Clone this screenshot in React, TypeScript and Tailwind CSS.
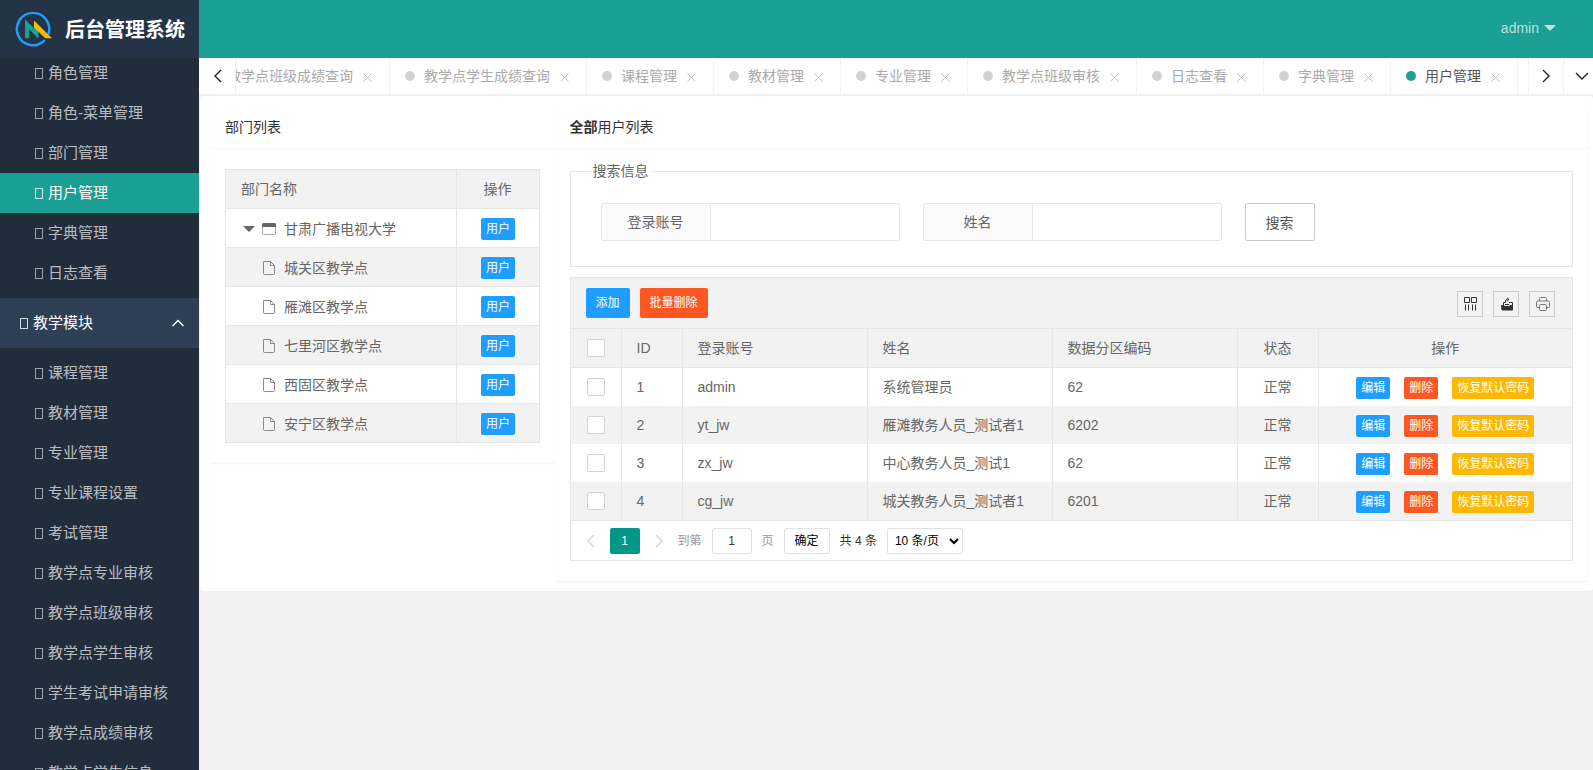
import { useState } from "react";
import clsx from "clsx";

interface UserRow {
    id: number,
    account: string,
    name: string,
    code: string,
}

const systemMenu = ["角色管理", "角色-菜单管理", "部门管理", "用户管理", "字典管理", "日志查看"];

const teachMenu = [
    "课程管理",
    "教材管理",
    "专业管理",
    "专业课程设置",
    "考试管理",
    "教学点专业审核",
    "教学点班级审核",
    "教学点学生审核",
    "学生考试申请审核",
    "教学点成绩审核",
    "教学点学生信息",
];

const tabs = [
    "教学点班级成绩查询",
    "教学点学生成绩查询",
    "课程管理",
    "教材管理",
    "专业管理",
    "教学点班级审核",
    "日志查看",
    "字典管理",
    "用户管理",
];

const departments = ["城关区教学点", "雁滩区教学点", "七里河区教学点", "西固区教学点", "安宁区教学点"];

const users: UserRow[] = [
    { id: 1, account: "admin", name: "系统管理员", code: "62" },
    { id: 2, account: "yt_jw", name: "雁滩教务人员_测试者1", code: "6202" },
    { id: 3, account: "zx_jw", name: "中心教务人员_测试1", code: "62" },
    { id: 4, account: "cg_jw", name: "城关教务人员_测试者1", code: "6201" },
];

const Chevron = ({ d, className }: { d: string, className?: string }) => (
    <svg width="14" height="14" viewBox="0 0 14 14" fill="none" stroke="currentColor" strokeWidth="1.4" className={className}>
        <path d={d} />
    </svg>
);

const LEFT = "M10 1 4 7l6 6";
const RIGHT = "M4 1l6 6-6 6";
const UP = "M1.500 10 7 4.500 12.500 10";
const DOWN = "M1 4l6 6 6-6";

const Logo = () => (
    <svg width="40" height="40" viewBox="0 0 40 40" fill="none">
        <path d="M33.300 25.500A16.200 16.200 0 1 0 29.800 31.200" stroke="#1e9fff" strokeWidth="2.400" />
        <path d="M10 10.300 23.300 23.500v5.800L14.300 20.500v8.800H10z" fill="#1aa094" />
        <path d="M19 16h4.300v13.300L19 25z" fill="#1aa094" />
        <path d="M19 11.500 37 29.300h-6.800L19 18.500z" fill="#ffb800" />
    </svg>
);

const FileIcon = () => (
    <svg width="14" height="14" viewBox="0 0 14 14" fill="none" stroke="#8a8a8a">
        <path d="M1.500.5h7l4 4v8q0 1-1 1h-9q-1 0-1-1v-11q0-1 1-1zM8.500.5v4h4" />
    </svg>
);

const CardIcon = () => (
    <svg width="14" height="12" viewBox="0 0 14 12" fill="none">
        <rect x=".5" y=".5" width="13" height="11" rx="1" stroke="#aaa" />
        <path d="M0 4V1.500Q0 0 1.500 0h11Q14 0 14 1.500V4z" fill="#666" />
    </svg>
);

// placeholder box shown when the menu icon font is missing a glyph
const MenuGlyph = () => <span className="h-[11px] w-2 shrink-0 border border-current opacity-80" />;

const MenuItem = (props: { title: string, active: boolean, onSelect: () => void }) => (
    <li>
        <a
            href="#"
            onClick={(e) => { e.preventDefault(); props.onSelect(); }}
            className={clsx(
                "flex h-10 items-center gap-[5px] pl-[35px] text-[15px] whitespace-nowrap",
                props.active ? "bg-[#1aa094] text-white" : "text-white/70 hover:text-white",
            )}
        >
            <MenuGlyph />
            {props.title}
        </a>
    </li>
);

const SmallButton = ({ color, children }: { color: string, children: string }) => (
    <button type="button" className={clsx("h-[22px] rounded-xs px-[5px] text-xs leading-[22px] text-white", color)}>
        {children}
    </button>
);

const CheckBox = ({ label }: { label: string }) => (
    <input
        type="checkbox"
        aria-label={label}
        className="block size-[18px] appearance-none rounded-xs border border-[#d2d2d2] bg-white checked:border-[#5fb878] checked:bg-[#5fb878]"
    />
);

const ToolButton = ({ label, children }: { label: string, children: React.ReactNode }) => (
    <button type="button" aria-label={label} className="flex size-[26px] items-center justify-center border border-[#ccc] pl-0.5">
        {children}
    </button>
);

const SearchField = ({ id, label }: { id: string, label: string }) => (
    <div className="flex">
        <label htmlFor={id} className="h-[38px] w-[110px] rounded-l-xs border border-[#e6e6e6] bg-[#fbfbfb] text-center leading-9">
            {label}
        </label>
        <input
            id={id}
            type="text"
            className="-ml-px h-[38px] w-[190px] rounded-r-xs border border-[#e6e6e6] bg-white px-2.5 outline-none focus:border-[#d2d2d2]"
        />
    </div>
);

const Sidebar = () => {
    const [current, setCurrent] = useState("用户管理");
    const [open, setOpen] = useState(true);

    return (
        <aside className="flex w-[199px] shrink-0 flex-col bg-[#222d3c]">
            <div className="z-10 flex h-[58px] shrink-0 items-center gap-[10px] bg-[#243346] pl-[15px]">
                <Logo />
                <h1 className="pt-0.5 text-xl font-bold whitespace-nowrap text-white">后台管理系统</h1>
            </div>
            <nav className="min-h-0 flex-1 overflow-hidden">
                <ul className="-mt-[5px] pb-[5px]">
                    {systemMenu.map((title) => (
                        <MenuItem key={title} title={title} active={current === title} onSelect={() => setCurrent(title)} />
                    ))}
                </ul>
                <button
                    type="button"
                    onClick={() => setOpen(!open)}
                    className="flex h-[50px] w-full items-center gap-[5px] bg-[#2f4056] pr-[14px] pl-5 text-[15px] text-white"
                >
                    <MenuGlyph />
                    教学模块
                    <Chevron d={open ? UP : DOWN} className="ml-auto" />
                </button>
                {open &&
                    <ul className="pt-[5px]">
                        {teachMenu.map((title) => (
                            <MenuItem key={title} title={title} active={current === title} onSelect={() => setCurrent(title)} />
                        ))}
                    </ul>
                }
            </nav>
        </aside>
    );
};

const TabBar = () => {
    const [active, setActive] = useState("用户管理");

    return (
        <div className="flex h-9 overflow-hidden bg-white text-[#222]">
            <button type="button" aria-label="向左" className="flex w-[37px] shrink-0 items-center justify-center border-r border-[#f2f2f2] pl-0.5">
                <Chevron d={LEFT} />
            </button>
            <div className="flex min-w-0 flex-1 justify-end overflow-hidden pr-[10px]">
                {tabs.map((title) => (
                    <div
                        key={title}
                        className={clsx(
                            "flex shrink-0 items-center border-r border-[#f2f2f2] pr-[17px] pl-[15px]",
                            active === title ? "text-[#555]" : "text-[#aaa]",
                        )}
                    >
                        <span className={clsx("size-[10px] rounded-full", active === title ? "bg-[#1aa094]" : "bg-[#d2d2d2]")} />
                        <button type="button" onClick={() => setActive(title)} className="mr-[10px] ml-[9px] whitespace-nowrap">
                            {title}
                        </button>
                        <button type="button" aria-label={"关闭" + title} className="mt-0.5 text-[#c2c2c2]">
                            <svg width="9" height="9" viewBox="0 0 9 9" fill="none" stroke="currentColor">
                                <path d="M.5.5l8 8M8.500.5l-8 8" />
                            </svg>
                        </button>
                    </div>
                ))}
            </div>
            <button type="button" aria-label="向右" className="flex w-9 shrink-0 items-center justify-center border-x border-[#f2f2f2]">
                <Chevron d={RIGHT} />
            </button>
            <button type="button" aria-label="更多" className="flex w-[29px] shrink-0 items-center justify-end pr-1">
                <Chevron d={DOWN} />
            </button>
        </div>
    );
};

const DepartmentCard = () => {
    const [expanded, setExpanded] = useState(true);

    return (
        <section className="self-start rounded-xs bg-white shadow-[0_1px_2px_rgba(0,0,0,0.06)]">
            <h2 className="h-[43px] border-b border-[#f6f6f6] px-[15px] leading-[42px] text-[#333]">部门列表</h2>
            <div className="px-[15px] py-5">
                <table className="w-full table-fixed border-collapse border border-[#e6e6e6]">
                    <colgroup>
                        <col />
                        <col className="w-[83px]" />
                    </colgroup>
                    <thead>
                        <tr className="h-[39px] bg-[#f2f2f2]">
                            <th className="border border-[#e6e6e6] px-[15px] text-left font-normal">部门名称</th>
                            <th className="border border-[#e6e6e6] text-center font-normal">操作</th>
                        </tr>
                    </thead>
                    <tbody>
                        <tr className="h-[39px]">
                            <td className="border border-[#e6e6e6] px-[15px]">
                                <div className="flex items-center pt-px whitespace-nowrap">
                                    <button type="button" aria-label="展开" onClick={() => setExpanded(!expanded)} className="mr-[5px] flex w-4 justify-center">
                                        <svg width="12" height="6" viewBox="0 0 12 6" fill="#666"><path d="M0 0h12L6 6z" /></svg>
                                    </button>
                                    <CardIcon />
                                    <span className="ml-2">甘肃广播电视大学</span>
                                </div>
                            </td>
                            <td className="border border-[#e6e6e6]">
                                <div className="flex justify-center pt-0.5 pl-px"><SmallButton color="bg-[#1e9fff]">用户</SmallButton></div>
                            </td>
                        </tr>
                        {expanded && departments.map((name, i) => (
                            <tr key={name} className={clsx("h-[39px]", i % 2 === 0 && "bg-[#f2f2f2]")}>
                                <td className="border border-[#e6e6e6] px-[15px]">
                                    <div className="flex items-center pt-px pl-[21px] whitespace-nowrap">
                                        <FileIcon />
                                        <span className="ml-2">{name}</span>
                                    </div>
                                </td>
                                <td className="border border-[#e6e6e6]">
                                    <div className="flex justify-center pt-0.5 pl-px"><SmallButton color="bg-[#1e9fff]">用户</SmallButton></div>
                                </td>
                            </tr>
                        ))}
                    </tbody>
                </table>
            </div>
        </section>
    );
};

const Pager = () => {
    const [page, setPage] = useState("1");

    return (
        <div className="flex h-10 items-center border-t border-[#e6e6e6] pl-3 text-xs text-[#333]">
            <button type="button" aria-label="上一页" className="flex w-[27px] pl-px text-[#d2d2d2]"><Chevron d={LEFT} /></button>
            <button type="button" className="h-[26px] w-[30px] rounded-xs bg-[#009688] text-white">1</button>
            <button type="button" aria-label="下一页" className="flex w-[38px] justify-center text-[#d2d2d2]"><Chevron d={RIGHT} /></button>
            <label htmlFor="page" className="text-[#999]">到第</label>
            <input
                id="page"
                type="text"
                value={page}
                onChange={(e) => setPage(e.target.value)}
                className="mx-[10px] h-[26px] w-10 rounded-xs border border-[#e2e2e2] bg-white text-center outline-none"
            />
            <span className="text-[#999]">页</span>
            <button type="button" className="mx-[10px] h-[26px] rounded-xs border border-[#e2e2e2] bg-white px-[10px] text-black">确定</button>
            <span>共 4 条</span>
            <select aria-label="每页条数" className="ml-[10px] h-[26px] w-[76px] rounded-xs border border-[#e2e2e2] bg-white px-[3px] text-black">
                <option>10 条/页</option>
                <option>20 条/页</option>
                <option>50 条/页</option>
            </select>
        </div>
    );
};

const cell = "border-r border-[#e6e6e6] px-[15px] whitespace-nowrap";
const head = "border-b border-r border-[#e6e6e6] px-[15px] text-left font-normal";

const UserTable = () => (
    <div className="mt-[10px] border border-[#e6e6e6]">
        <div className="flex h-[51px] items-center border-b border-[#e6e6e6] bg-[#f2f2f2] pr-[17px] pl-[15px]">
            <button type="button" className="h-[30px] rounded-xs bg-[#1e9fff] px-[10px] text-xs text-white">添加</button>
            <button type="button" className="ml-[10px] h-[30px] rounded-xs bg-[#ff5722] px-[10px] text-xs text-white">批量删除</button>
            <div className="ml-auto flex gap-[10px] pt-0.5">
                <ToolButton label="筛选列">
                    <svg width="14" height="14" viewBox="0 0 14 14" fill="none" stroke="#333">
                        <path d="M.5.5h5v5h-5zM7.500.5h5v5h-5zM1.500 7.500v6M4.500 7.500v6M8.500 7.500v6M11.500 7.500v6" />
                    </svg>
                </ToolButton>
                <ToolButton label="导出">
                    <svg width="14" height="14" viewBox="0 0 14 14" fill="none" stroke="#333">
                        <path d="M1.500 8.500h2.500l1 1h4l1-1h2.500v4.500h-10.500z" fill="#333" />
                        <path d="M3.500 8V5.500h2V4q0-1.500 2-1.500M7 .8 9 2.500 7 4.200M9 5.500h3.500V9M5 7.500h4" />
                    </svg>
                </ToolButton>
                <ToolButton label="打印">
                    <svg width="14" height="14" viewBox="0 0 14 14" fill="none" stroke="#777">
                        <path d="M3.500 4V1.500q0-1 1-1h5q1 0 1 1V4M3 10.500H1.500q-1 0-1-1V5.500q0-1.500 1.500-1.500h10q1.500 0 1.500 1.500v4q0 1-1 1H11" />
                        <rect x="3.500" y="7.500" width="7" height="6" rx="1" />
                    </svg>
                </ToolButton>
            </div>
        </div>
        <table className="w-full table-fixed border-separate border-spacing-0">
            <colgroup>
                <col className="w-[51px]" />
                <col className="w-[61px]" />
                <col className="w-[185px]" />
                <col className="w-[185px]" />
                <col className="w-[185px]" />
                <col className="w-[81px]" />
                <col />
            </colgroup>
            <thead>
                <tr className="h-[39px] bg-[#f2f2f2]">
                    <th className="border-r border-b border-[#e6e6e6] pl-4"><CheckBox label="全选" /></th>
                    <th className={head}>ID</th>
                    <th className={head}>登录账号</th>
                    <th className={head}>姓名</th>
                    <th className={head}>数据分区编码</th>
                    <th className="border-r border-b border-[#e6e6e6] text-center font-normal">状态</th>
                    <th className="border-b border-[#e6e6e6] text-center font-normal">操作</th>
                </tr>
            </thead>
            <tbody>
                {users.map((user) => (
                    <tr key={user.id} className="h-[38px] even:bg-[#f2f2f2]">
                        <td className="border-r border-[#e6e6e6] pl-4"><CheckBox label={"选择 " + user.account} /></td>
                        <td className={cell}>{user.id}</td>
                        <td className={cell}>{user.account}</td>
                        <td className={cell}>{user.name}</td>
                        <td className={cell}>{user.code}</td>
                        <td className="border-r border-[#e6e6e6] text-center">正常</td>
                        <td>
                            <div className="flex justify-center gap-[14px] pt-0.5">
                                <SmallButton color="bg-[#1e9fff]">编辑</SmallButton>
                                <SmallButton color="bg-[#ff5722]">删除</SmallButton>
                                <SmallButton color="bg-[#ffb800]">恢复默认密码</SmallButton>
                            </div>
                        </td>
                    </tr>
                ))}
            </tbody>
        </table>
        <Pager />
    </div>
);

const UserCard = () => (
    <section className="col-span-3 rounded-xs bg-white shadow-[0_1px_2px_rgba(0,0,0,0.06)]">
        <h2 className="h-[43px] border-b border-[#f6f6f6] px-[15px] leading-[42px] text-[#333]">
            <b>全部</b>用户列表
        </h2>
        <div className="px-[15px] pt-[10px] pb-5">
            <fieldset className="border border-[#e6e6e6]">
                <legend className="ml-5 px-0.5 leading-6">搜索信息</legend>
                <form className="flex flex-wrap gap-[23px] px-[30px] pt-5 pb-[25px]" onSubmit={(e) => e.preventDefault()}>
                    <SearchField id="account" label="登录账号" />
                    <SearchField id="name" label="姓名" />
                    <button type="submit" className="h-[38px] w-[70px] rounded-xs border border-[#c9c9c9] bg-white pt-0.5 text-[#555]">搜索</button>
                </form>
            </fieldset>
            <UserTable />
        </div>
    </section>
);

const App = () => (
    <div className="flex h-screen overflow-hidden bg-[#f1f1f1] font-['Liberation_Sans','Noto_Sans_CJK_SC',sans-serif] text-sm text-[#666]">
        <Sidebar />
        <div className="flex min-w-0 flex-1 flex-col">
            <header className="flex h-[58px] shrink-0 items-center justify-end bg-[#1aa094] pr-[37px] pb-0.5">
                <button type="button" className="flex items-center gap-[5px] text-white/70">
                    admin
                    <svg width="12" height="6" viewBox="0 0 12 6" fill="currentColor"><path d="M0 0h12L6 6z" /></svg>
                </button>
            </header>
            <TabBar />
            <main className="mt-0.5 ml-px grid grid-cols-4 rounded bg-white pt-[10px] pr-[5px] pb-[10px] pl-[10px]">
                <DepartmentCard />
                <UserCard />
            </main>
        </div>
    </div>
);

export default App;
